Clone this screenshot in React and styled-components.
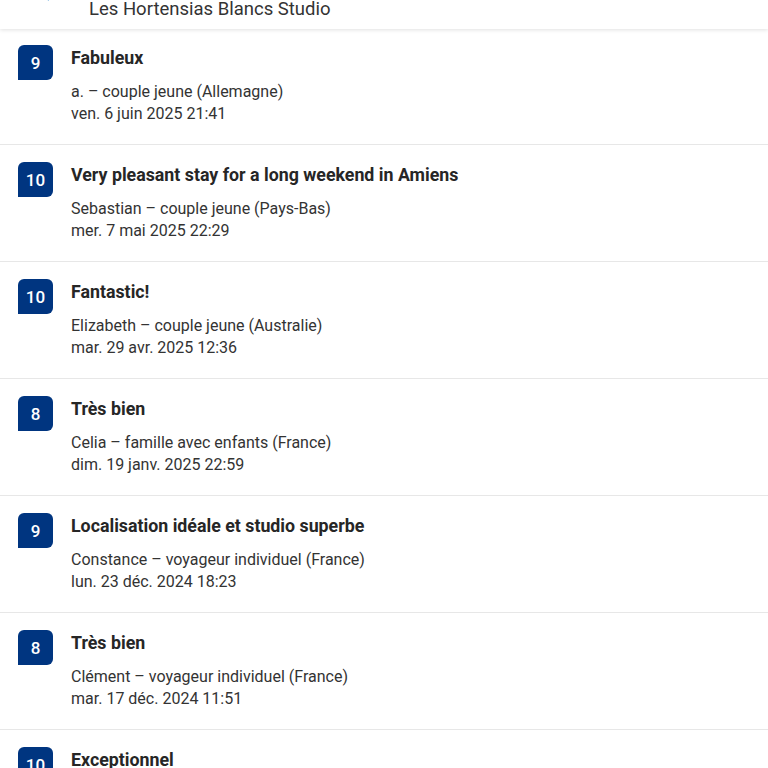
import React from 'react'
import styled, { createGlobalStyle } from 'styled-components'

const Global = createGlobalStyle`
  body {
    margin: 0;
    background: #fff;
    font-family: Roboto, "Noto Sans", sans-serif;
  }
`;

const Page = styled.div`
  width: 768px;
  height: 768px;
  overflow: hidden;
  background: #fff;
`;

const Header = styled.div`
  height: 29px;
  display: flex;
  align-items: flex-end;
  overflow: hidden;
  background: #fff;
  box-shadow: 0 1px 4px rgba(0, 0, 0, 0.12);
  position: relative;
  z-index: 1;
`;

const HeaderRow = styled.div`
  display: flex;
  align-items: flex-end;
  gap: 37px;
  padding: 0 0 9px 30px;
`;

const HeaderIcon = styled.div`
  width: 22px;
  height: 22px;
  margin-bottom: 17px;
  color: #0071c2;
  display: flex;
`;

const HeaderTitle = styled.div`
  font-size: 18.5px;
  color: #333;
  line-height: 22px;
`;

const List = styled.div`
  padding-top: 16px;
`;

const Review = styled.div`
  display: flex;
  gap: 18px;
  padding: 0 18px 19px;
  border-bottom: 1px solid #e7e7e7;
  & + & {
    padding-top: 17px;
  }
`;

const Badge = styled.div`
  flex: none;
  width: 35px;
  height: 35px;
  background: #003580;
  color: #fff;
  border-radius: 6px 6px 6px 0;
  display: flex;
  align-items: center;
  justify-content: center;
  font-size: 17px;
  font-weight: 500;
`;

const Body = styled.div`
  display: flex;
  flex-direction: column;
`;

const Title = styled.div`
  font-size: 17.8px;
  font-weight: 700;
  color: #262626;
  line-height: 26px;
  margin-bottom: 10px;
`;

const Meta = styled.div`
  font-size: 16px;
  color: #333;
  line-height: 22px;
`;

const reviews = [
  { score: 9, title: 'Fabuleux', who: 'a. – couple jeune (Allemagne)', date: 'ven. 6 juin 2025 21:41' },
  { score: 10, title: 'Very pleasant stay for a long weekend in Amiens', who: 'Sebastian – couple jeune (Pays-Bas)', date: 'mer. 7 mai 2025 22:29' },
  { score: 10, title: 'Fantastic!', who: 'Elizabeth – couple jeune (Australie)', date: 'mar. 29 avr. 2025 12:36' },
  { score: 8, title: 'Très bien', who: 'Celia – famille avec enfants (France)', date: 'dim. 19 janv. 2025 22:59' },
  { score: 9, title: 'Localisation idéale et studio superbe', who: 'Constance – voyageur individuel (France)', date: 'lun. 23 déc. 2024 18:23' },
  { score: 8, title: 'Très bien', who: 'Clément – voyageur individuel (France)', date: 'mar. 17 déc. 2024 11:51' },
  { score: 10, title: 'Exceptionnel', who: 'Anne – couple (France)', date: 'sam. 14 déc. 2024 10:12' },
];

export default function App() {
  return (
    <Page>
      <Global />
      <Header>
        <HeaderRow>
          <HeaderIcon>
            <svg width="22" height="22" viewBox="0 0 24 24" fill="none" stroke="currentColor" strokeWidth="2.4" strokeLinecap="round">
              <circle cx="10" cy="10" r="6" />
              <path d="M14.5 14.5 20 20" />
            </svg>
          </HeaderIcon>
          <HeaderTitle>Les Hortensias Blancs Studio</HeaderTitle>
        </HeaderRow>
      </Header>
      <List>
        {reviews.map((r, i) => (
          <Review key={i}>
            <Badge>{r.score}</Badge>
            <Body>
              <Title>{r.title}</Title>
              <Meta>{r.who}</Meta>
              <Meta>{r.date}</Meta>
            </Body>
          </Review>
        ))}
      </List>
    </Page>
  )
}
